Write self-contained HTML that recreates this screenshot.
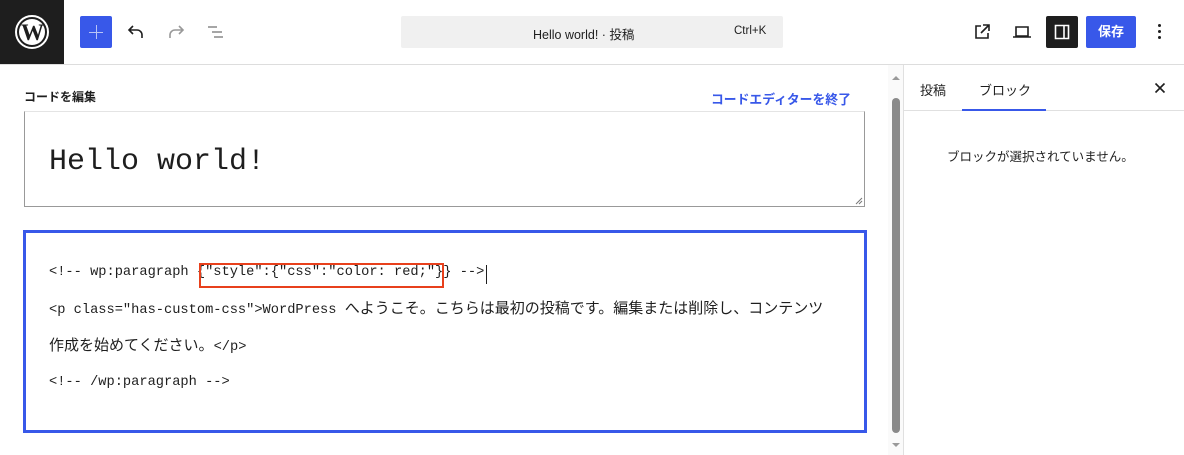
<!DOCTYPE html>
<html><head><meta charset="utf-8"><style>
*{box-sizing:border-box;margin:0;padding:0}
body{width:1184px;height:455px;overflow:hidden;background:#fff;font-family:"Liberation Sans","Noto Sans CJK JP",sans-serif;color:#1e1e1e;position:relative}
.abs{position:absolute}
.mono{font-family:"Liberation Mono","Noto Sans CJK JP",monospace}
.j{font-size:15px}
</style></head><body>
<!-- header -->
<div class="abs" style="left:0;top:0;width:64px;height:64px;background:#1e1e1e"></div>
<div class="abs" style="left:15px;top:15px;width:34px;height:34px;border-radius:50%;border:2px solid #fff;padding:2px"><div style="width:26px;height:26px;border-radius:50%;background:#fff;text-align:center;font-family:'Liberation Serif',serif;font-weight:bold;font-size:23px;line-height:27px;color:#1e1e1e;letter-spacing:-1px">W</div></div>
<div class="abs" style="left:0;top:64px;width:1184px;height:1px;background:#ddd"></div>
<div class="abs" style="left:80px;top:16px;width:32px;height:32px;background:#3858e9;border-radius:2px"></div>
<div class="abs" style="left:89px;top:31.5px;width:14px;height:1px;background:#b8c4f6"></div>
<div class="abs" style="left:95.5px;top:25px;width:1px;height:14px;background:#b8c4f6"></div>
<svg class="abs" style="left:124px;top:20px" width="24" height="24" viewBox="0 0 24 24"><path d="M18 18v-3a5 5 0 0 0-5-5H5M9 6l-4 4 4 4" fill="none" stroke="#1e1e1e" stroke-width="1.6"/></svg>
<svg class="abs" style="left:164px;top:20px" width="24" height="24" viewBox="0 0 24 24"><path d="M6 18v-3a5 5 0 0 1 5-5h8M15 6l4 4-4 4" fill="none" stroke="#999" stroke-width="1.6"/></svg>
<svg class="abs" style="left:204px;top:20px" width="24" height="24" viewBox="0 0 24 24"><path d="M4 7h9M8 12h10M10 17h9" fill="none" stroke="#888" stroke-width="1.6"/></svg>
<div class="abs" style="left:401px;top:16px;width:382px;height:32px;background:#f0f0f0;border-radius:2px;font-size:12.5px"><span class="abs" style="left:132px;top:8px">Hello world! · 投稿</span><span class="abs" style="left:333px;top:9px;font-size:11.5px">Ctrl+K</span></div>
<svg class="abs" style="left:970px;top:20px" width="24" height="24" viewBox="0 0 24 24"><path d="M11 6H6v12h12v-5M13 5h6v6M19 5l-8 8" fill="none" stroke="#1e1e1e" stroke-width="1.6"/></svg>
<svg class="abs" style="left:1010px;top:20px" width="24" height="24" viewBox="0 0 24 24"><path d="M6 7h12v9H6zM3 17h18" fill="none" stroke="#1e1e1e" stroke-width="1.6"/></svg>
<div class="abs" style="left:1046px;top:16px;width:32px;height:32px;background:#1e1e1e;border-radius:2px"></div>
<svg class="abs" style="left:1050px;top:20px" width="24" height="24" viewBox="0 0 24 24"><path d="M5.5 5.5h13v13h-13zM14 5.5v13" fill="none" stroke="#fff" stroke-width="1.6"/></svg>
<div class="abs" style="left:1086px;top:16px;width:50px;height:32px;background:#3858e9;border-radius:2px;color:#fff;font-size:13px;font-weight:bold;text-align:center;line-height:32px">保存</div>
<div class="abs" style="left:1158px;top:24px;width:3px;height:3px;background:#1e1e1e;border-radius:50%;box-shadow:0 6px 0 #1e1e1e,0 12px 0 #1e1e1e"></div>
<!-- editor -->
<div class="abs" style="left:24px;top:88px;font-size:12px;font-weight:bold">コードを編集</div>
<div class="abs" style="left:711px;top:89px;font-size:12.8px;color:#3858e9;font-weight:bold">コードエディターを終了</div>
<div class="abs" style="left:24px;top:111px;width:841px;height:96px;border:1px solid #999;border-top-color:#e4e4e4"></div>
<svg class="abs" style="left:855px;top:197px" width="8" height="8"><path d="M1 7L7 1M4 7L7 4" stroke="#777" stroke-width="1"/></svg>
<div class="abs mono" style="left:49px;top:145px;font-size:30px">Hello world!</div>
<div class="abs" style="left:23px;top:230px;width:844px;height:203px;border:3px solid #3858e9"></div>
<div class="abs mono" style="left:49px;top:263px;font-size:13.7px;line-height:20px;color:#1e1e1e">
<div style="position:absolute;top:0;white-space:pre">&lt;!-- wp:paragraph {"style":{"css":"color: red;"}} --&gt;</div>
<div style="position:absolute;top:37px;white-space:pre">&lt;p class="has-custom-css"&gt;WordPress <span class="j">へようこそ。こちらは最初の投稿です。編集または削除し、コンテンツ</span></div>
<div style="position:absolute;top:74px;white-space:pre"><span class="j">作成を始めてください。</span>&lt;/p&gt;</div>
<div style="position:absolute;top:110px;white-space:pre">&lt;!-- /wp:paragraph --&gt;</div>
</div>
<div class="abs" style="left:199px;top:263px;width:245px;height:25px;border:2px solid #e8401c"></div>
<div class="abs" style="left:486px;top:265px;width:1px;height:19px;background:#1e1e1e"></div>
<!-- scrollbar -->
<div class="abs" style="left:888px;top:65px;width:15px;height:390px;background:#fafafa"></div>
<div class="abs" style="left:892px;top:98px;width:8px;height:335px;background:#8a8a8a;border-radius:4px"></div>
<div class="abs" style="left:892px;top:72px;width:0;height:0;border:4px solid transparent;border-bottom-color:#999"></div>
<div class="abs" style="left:892px;top:443px;width:0;height:0;border:4px solid transparent;border-top-color:#999"></div>
<!-- sidebar -->
<div class="abs" style="left:903px;top:65px;width:1px;height:390px;background:#e0e0e0"></div>
<div class="abs" style="left:904px;top:110px;width:280px;height:1px;background:#e0e0e0"></div>
<div class="abs" style="left:920px;top:80px;font-size:13px">投稿</div>
<div class="abs" style="left:979px;top:80px;font-size:13px">ブロック</div>
<div class="abs" style="left:962px;top:109px;width:84px;height:2px;background:#3858e9"></div>
<svg class="abs" style="left:1154px;top:82px" width="12" height="12" viewBox="0 0 12 12"><path d="M1.5 1.5l9 9M10.5 1.5l-9 9" stroke="#1e1e1e" stroke-width="1.6"/></svg>
<div class="abs" style="left:947px;top:146px;font-size:12.5px">ブロックが選択されていません。</div>
</body></html>
